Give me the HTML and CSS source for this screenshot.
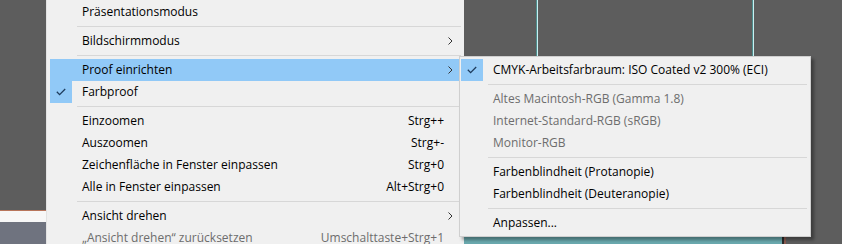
FILE: index.html
```html
<!DOCTYPE html>
<html lang="de">
<head>
<meta charset="utf-8">
<title>Ansicht-Menü</title>
<link rel="stylesheet" href="styles.css">
</head>
<body>
<div class="stage">
  <div class="guide guide-a"></div>
  <div class="guide guide-b"></div>
  <div class="panel-left">
    <div class="panel-line"></div>
    <div class="panel-white"></div>
    <div class="panel-blue"></div>
  </div>
  <div class="canvas-bottom"></div>
  <div class="canvas-edge"></div>

  <div class="menu main-menu">
    <div class="item"><span class="check"></span><span class="label">Präsentationsmodus</span></div>
    <div class="sep"></div>
    <div class="item"><span class="check"></span><span class="label">Bildschirmmodus</span><span class="arrow"><svg width="5" height="8" viewBox="0 0 5 8"><path d="M0.5 0.5 L4 4 L0.5 7.5" fill="none" stroke="#333" stroke-width="1"/></svg></span></div>
    <div class="sep"></div>
    <div class="item active"><span class="check"></span><span class="label">Proof einrichten</span><span class="arrow"><svg width="5" height="8" viewBox="0 0 5 8"><path d="M0.5 0.5 L4 4 L0.5 7.5" fill="none" stroke="#333" stroke-width="1"/></svg></span></div>
    <div class="item"><span class="check on"><svg width="10" height="8" viewBox="0 0 10 8"><path d="M0.8 3.8 L3.6 6.6 L9.2 1" fill="none" stroke="#1d3b5c" stroke-width="1.3"/></svg></span><span class="label">Farbproof</span></div>
    <div class="sep"></div>
    <div class="item"><span class="check"></span><span class="label">Einzoomen</span><span class="key">Strg++</span></div>
    <div class="item"><span class="check"></span><span class="label">Auszoomen</span><span class="key">Strg+-</span></div>
    <div class="item"><span class="check"></span><span class="label">Zeichenfläche in Fenster einpassen</span><span class="key">Strg+0</span></div>
    <div class="item"><span class="check"></span><span class="label">Alle in Fenster einpassen</span><span class="key">Alt+Strg+0</span></div>
    <div class="sep"></div>
    <div class="item"><span class="check"></span><span class="label">Ansicht drehen</span><span class="arrow"><svg width="5" height="8" viewBox="0 0 5 8"><path d="M0.5 0.5 L4 4 L0.5 7.5" fill="none" stroke="#333" stroke-width="1"/></svg></span></div>
    <div class="item disabled"><span class="check"></span><span class="label">„Ansicht drehen“ zurücksetzen</span><span class="key">Umschalttaste+Strg+1</span></div>
  </div>

  <div class="menu sub-menu">
    <div class="item"><span class="check on"><svg width="10" height="8" viewBox="0 0 10 8"><path d="M0.8 3.8 L3.6 6.6 L9.2 1" fill="none" stroke="#1d3b5c" stroke-width="1.3"/></svg></span><span class="label">CMYK-Arbeitsfarbraum: ISO Coated v2 300% (ECI)</span></div>
    <div class="sep"></div>
    <div class="item disabled"><span class="check"></span><span class="label">Altes Macintosh-RGB (Gamma 1.8)</span></div>
    <div class="item disabled"><span class="check"></span><span class="label">Internet-Standard-RGB (sRGB)</span></div>
    <div class="item disabled"><span class="check"></span><span class="label">Monitor-RGB</span></div>
    <div class="sep"></div>
    <div class="item"><span class="check"></span><span class="label">Farbenblindheit (Protanopie)</span></div>
    <div class="item"><span class="check"></span><span class="label">Farbenblindheit (Deuteranopie)</span></div>
    <div class="sep"></div>
    <div class="item"><span class="check"></span><span class="label">Anpassen...</span></div>
  </div>
</div>
</body>
</html>
```

FILE: styles.css
```css
html, body {
  margin: 0;
  padding: 0;
}
body {
  width: 842px;
  height: 244px;
  overflow: hidden;
  background: #5d5d5d;
  font-family: "Open Sans", "Noto Sans", "Liberation Sans", sans-serif;
  font-size: 12px;
  color: #000;
}
.stage {
  position: relative;
  width: 842px;
  height: 244px;
  overflow: hidden;
  background: #5d5d5d;
}
.guide {
  position: absolute;
  top: 0;
  width: 1px;
  height: 244px;
  background: #c8f0f2;
  box-shadow: -1px 0 0 #4f8d8c;
}
.guide-a { left: 537px; }
.guide-b { left: 753px; }

.panel-left {
  position: absolute;
  left: 0;
  top: 210px;
  width: 46px;
  height: 34px;
  display: flex;
  flex-direction: column;
}
.panel-line { height: 1px; background: #b8765c; }
.panel-white { height: 11px; background: #f7f7f7; }
.panel-blue { flex: 1; background: #6f737f; }

.canvas-bottom {
  position: absolute;
  left: 463px;
  top: 236px;
  width: 320px;
  height: 8px;
  background: #6aa9ae;
}
.canvas-edge {
  position: absolute;
  left: 782px;
  top: 236px;
  width: 2px;
  height: 8px;
  background: #2b2b2b;
  box-shadow: 2px 0 0 #8a5a50;
}

.menu {
  position: absolute;
  background: #f0f0f0;
  display: flex;
  flex-direction: column;
  box-sizing: border-box;
}
.main-menu {
  left: 46px;
  top: -2px;
  width: 418px;
  height: 260px;
  padding: 3px 2px 2px 3px;
  border-left: 1px solid #e2e2e2;
}
.sub-menu {
  left: 459px;
  top: 56px;
  width: 352px;
  padding: 2px 2px 2px 1px;
  border: 1px solid #cfcfcf;
  box-shadow: 3px 3px 3px rgba(0, 0, 0, 0.35);
  z-index: 2;
}
.item {
  display: flex;
  align-items: center;
  height: 22px;
  flex: none;
  white-space: nowrap;
}
.item.active {
  background: #91c9f7;
}
.item.disabled {
  color: #6d6d6d;
}
.check {
  width: 22px;
  height: 22px;
  flex: none;
  display: flex;
  align-items: center;
  justify-content: center;
}
.check.on {
  background: #91c9f7;
}
.label {
  margin-left: 10px;
  flex: 1;
  padding-bottom: 2px;
}
.key {
  margin-right: 18px;
  text-align: right;
  padding-bottom: 2px;
}
.arrow {
  width: 5px;
  margin-right: 9px;
  display: flex;
  align-items: center;
}
.sep {
  height: 7px;
  flex: none;
  display: flex;
  align-items: center;
  padding-left: 27px;
  padding-right: 1px;
}
.sep::before {
  content: "";
  display: block;
  width: 100%;
  height: 1px;
  background: #d7d7d7;
}
```
